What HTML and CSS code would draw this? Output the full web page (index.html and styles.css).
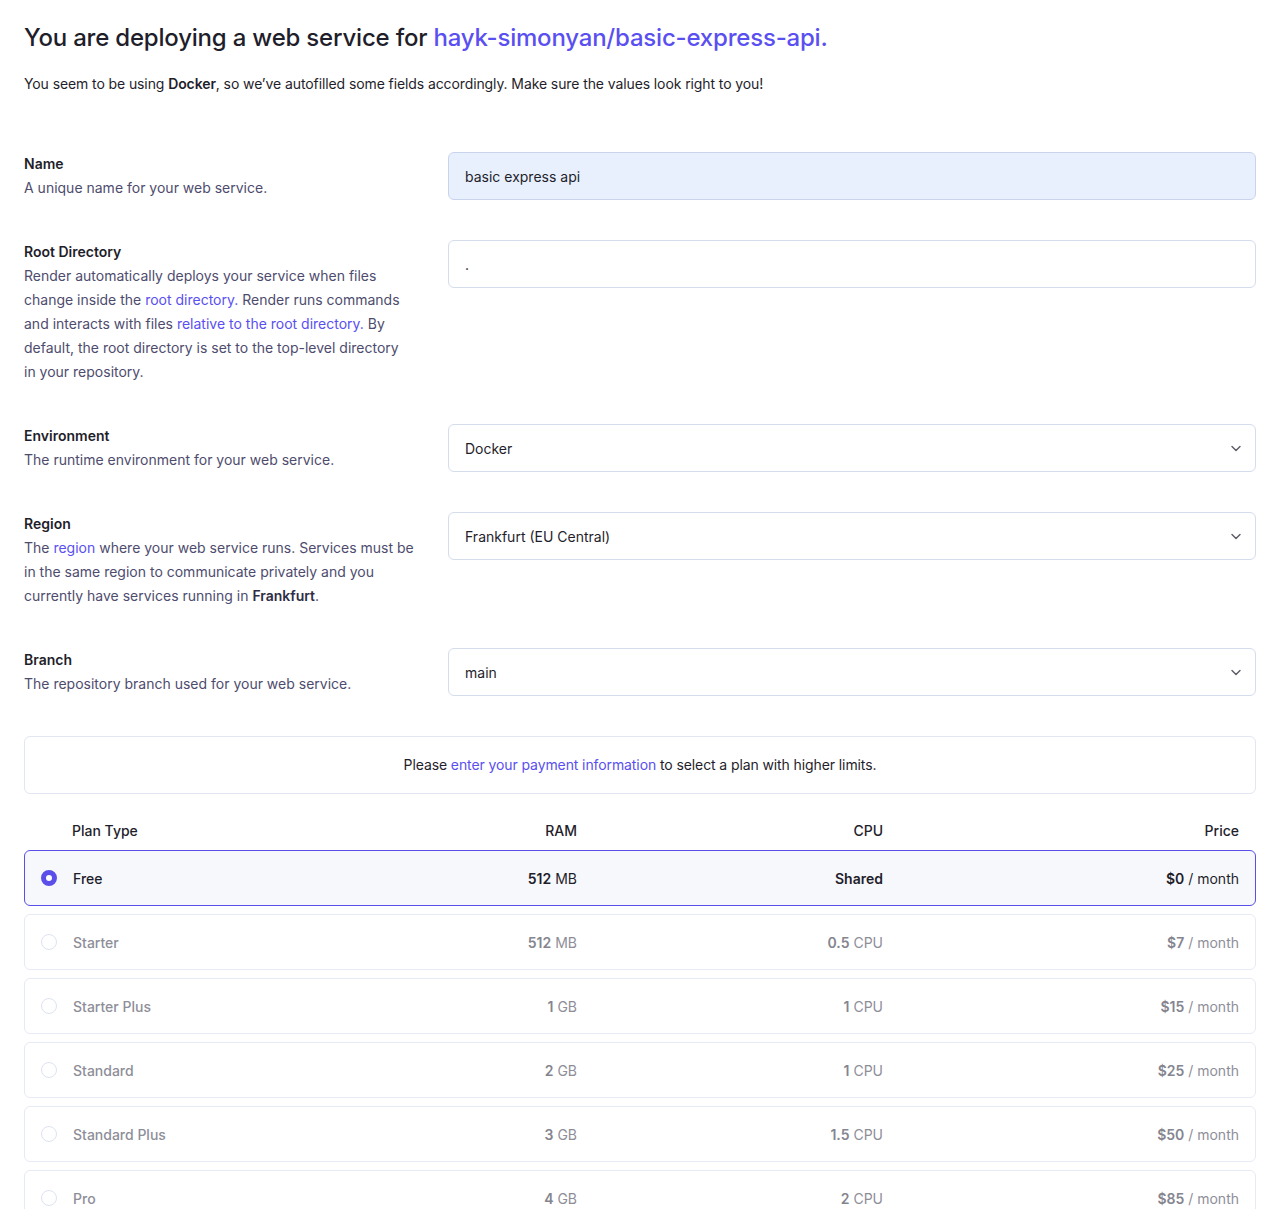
FILE: index.html
```html
<!DOCTYPE html>
<html lang="en">
<head>
<meta charset="utf-8">
<title>Deploy web service</title>
<link rel="stylesheet" href="styles.css">
</head>
<body>
<main class="page">
  <h1 class="title">You are deploying a web service for <a class="repo" href="#">hayk-simonyan/basic-express-api.</a></h1>
  <p class="intro">You seem to be using <strong>Docker</strong>, so we’ve autofilled some fields accordingly. Make sure the values look right to you!</p>

  <section class="form">
    <div class="label">
      <div class="label-title">Name</div>
      <div class="label-desc">A unique name for your web service.</div>
    </div>
    <div class="field"><div class="input autofill">basic express api</div></div>

    <div class="label">
      <div class="label-title">Root Directory</div>
      <div class="label-desc">Render automatically deploys your service when files change inside the <a href="#">root directory.</a> Render runs commands and interacts with files <a href="#">relative to the root directory.</a> By default, the root directory is set to the top-level directory<br>in your repository.</div>
    </div>
    <div class="field"><div class="input">.</div></div>

    <div class="label">
      <div class="label-title">Environment</div>
      <div class="label-desc">The runtime environment for your web service.</div>
    </div>
    <div class="field"><div class="input select"><span>Docker</span><svg class="chev" width="12" height="12" viewBox="0 0 12 12"><path d="M2 4.5l4 4 4-4" fill="none" stroke="#5b5b66" stroke-width="1.4" stroke-linecap="round" stroke-linejoin="round"/></svg></div></div>

    <div class="label">
      <div class="label-title">Region</div>
      <div class="label-desc">The <a href="#">region</a> where your web service runs. Services must be in the same region to communicate privately and you currently have services running in <strong>Frankfurt</strong>.</div>
    </div>
    <div class="field"><div class="input select"><span>Frankfurt (EU Central)</span><svg class="chev" width="12" height="12" viewBox="0 0 12 12"><path d="M2 4.5l4 4 4-4" fill="none" stroke="#5b5b66" stroke-width="1.4" stroke-linecap="round" stroke-linejoin="round"/></svg></div></div>

    <div class="label">
      <div class="label-title">Branch</div>
      <div class="label-desc">The repository branch used for your web service.</div>
    </div>
    <div class="field"><div class="input select"><span>main</span><svg class="chev" width="12" height="12" viewBox="0 0 12 12"><path d="M2 4.5l4 4 4-4" fill="none" stroke="#5b5b66" stroke-width="1.4" stroke-linecap="round" stroke-linejoin="round"/></svg></div></div>
  </section>

  <div class="notice"><p class="notice-text">Please <a href="#">enter your payment information</a> to select a plan with higher limits.</p></div>

  <section class="plans">
    <div class="plan-head">
      <span></span>
      <span class="c-name">Plan Type</span>
      <span class="c-num">RAM</span>
      <span class="c-num">CPU</span>
      <span class="c-num">Price</span>
    </div>
    <div class="plan selected">
      <span class="radio"></span>
      <span class="c-name">Free</span>
      <span class="c-num"><b>512</b> MB</span>
      <span class="c-num"><b>Shared</b></span>
      <span class="c-num"><b>$0</b> / month</span>
    </div>
    <div class="plan">
      <span class="radio"></span>
      <span class="c-name">Starter</span>
      <span class="c-num"><b>512</b> MB</span>
      <span class="c-num"><b>0.5</b> CPU</span>
      <span class="c-num"><b>$7</b> / month</span>
    </div>
    <div class="plan">
      <span class="radio"></span>
      <span class="c-name">Starter Plus</span>
      <span class="c-num"><b>1</b> GB</span>
      <span class="c-num"><b>1</b> CPU</span>
      <span class="c-num"><b>$15</b> / month</span>
    </div>
    <div class="plan">
      <span class="radio"></span>
      <span class="c-name">Standard</span>
      <span class="c-num"><b>2</b> GB</span>
      <span class="c-num"><b>1</b> CPU</span>
      <span class="c-num"><b>$25</b> / month</span>
    </div>
    <div class="plan">
      <span class="radio"></span>
      <span class="c-name">Standard Plus</span>
      <span class="c-num"><b>3</b> GB</span>
      <span class="c-num"><b>1.5</b> CPU</span>
      <span class="c-num"><b>$50</b> / month</span>
    </div>
    <div class="plan">
      <span class="radio"></span>
      <span class="c-name">Pro</span>
      <span class="c-num"><b>4</b> GB</span>
      <span class="c-num"><b>2</b> CPU</span>
      <span class="c-num"><b>$85</b> / month</span>
    </div>
  </section>
</main>
</body>
</html>
```
FILE: styles.css
```css
* { box-sizing: border-box; }
html, body { margin: 0; padding: 0; background: #fff; }
body {
  font-family: Inter, "Noto Sans", "Liberation Sans", sans-serif;
  color: #1e1e2c;
  font-size: 14px;
}
a { color: #5a4ff0; text-decoration: none; }
.page { padding: 22px 21px 40px 24px; }
.title {
  margin: 0;
  font-size: 24px;
  line-height: 32px;
  font-weight: 500;
  color: #1f1e2b;
  letter-spacing: -0.2px;
}
.repo { color: #5a4ff0; }
.intro {
  margin: 20px 0 0;
  font-size: 14px;
  line-height: 20px;
  color: #1f1e2b;
  letter-spacing: -0.1px;
}
.intro strong { font-weight: 600; }

.form {
  margin-top: 58px;
  display: grid;
  grid-template-columns: 400px 1fr;
  column-gap: 24px;
  row-gap: 40px;
}
.label-title { font-weight: 600; line-height: 24px; color: #1f1e2b; }
.label-desc { line-height: 24px; color: #4e4c6e; }
.label-desc strong { font-weight: 600; color: #2e2d45; }
.input {
  height: 48px;
  border: 1px solid #d4dcee;
  border-radius: 6px;
  padding: 0 16px;
  display: flex;
  align-items: center;
  justify-content: space-between;
  font-size: 14px;
  color: #1f1e2b;
  background: #fff;
}
.input.autofill { background: #e8f0fe; border-color: #c8d4ee; }
.chev { flex: none; margin-right: -3px; }

.notice {
  margin-top: 40px;
  height: 58px;
  border: 1px solid #e1e6f2;
  border-radius: 6px;
  display: flex;
  align-items: center;
  justify-content: center;
  color: #1f1e2b;
}
.notice-text { margin: 0; line-height: 20px; letter-spacing: -0.1px; }

.plans { margin-top: 24px; display: flex; flex-direction: column; gap: 8px; }
.plan-head, .plan {
  display: grid;
  grid-template-columns: 18px 319px 200px 306px 356px;
  align-items: center;
  padding: 0 16px 0 15px;
  border: 1px solid transparent;
}
.plan-head { height: 24px; font-weight: 500; color: #1f1e2b; }
.plan-head .c-name { padding-left: 14px; }
.c-name { padding-left: 15px; }
.c-num { text-align: right; }
.plan {
  height: 56px;
  border-color: #e6eaf4;
  border-radius: 6px;
  color: #8e8e99;
  font-weight: 500;
}
.plan b { font-weight: 600; color: #85858f; }
.plan .c-num { font-weight: 400; }
.plan.selected {
  border-color: #5a4fe8;
  background: #f7f8fc;
  color: #1f1e2b;
}
.plan.selected b { color: #1f1e2b; }
.radio {
  width: 16px;
  height: 16px;
  border-radius: 50%;
  border: 1px solid #dde3ef;
  background: #fff;
  margin-left: 1px;
}
.selected .radio { border: 5px solid #5a4fe8; }
```
